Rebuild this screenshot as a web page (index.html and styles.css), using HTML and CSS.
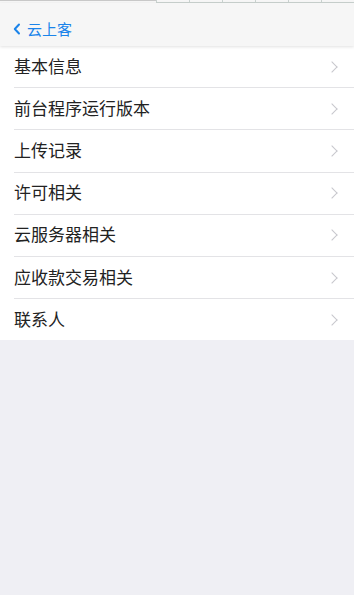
FILE: index.html
```html
<!DOCTYPE html>
<html lang="zh-CN">
<head>
    <meta charset="UTF-8">
    <meta name="viewport" content="width=device-width, initial-scale=1.0">
    <title>云上客</title>
    <link rel="stylesheet" href="styles.css">
</head>
<body>
    <div class="top-strip">
        <div class="strip-left"></div>
        <div class="strip-cells">
            <span></span><span></span><span></span><span></span><span></span><span></span>
        </div>
    </div>

    <div class="navbar">
        <a class="back" href="#">
            <svg width="8" height="12" viewBox="0 0 8 12"><path d="M6 1.5 L1.8 6 L6 10.5" fill="none" stroke="#1b84ea" stroke-width="2" stroke-linecap="round" stroke-linejoin="round"/></svg>
            <span>云上客</span>
        </a>
    </div>

    <ul class="menu">
        <li><span>基本信息</span><i class="chevron"></i></li>
        <li><span>前台程序运行版本</span><i class="chevron"></i></li>
        <li><span>上传记录</span><i class="chevron"></i></li>
        <li><span>许可相关</span><i class="chevron"></i></li>
        <li><span>云服务器相关</span><i class="chevron"></i></li>
        <li><span>应收款交易相关</span><i class="chevron"></i></li>
        <li><span>联系人</span><i class="chevron"></i></li>
    </ul>
</body>
</html>
```

FILE: styles.css
```css
/* Global */
body {
    margin: 0;
    padding: 0;
    background-color: #efeff4;
    font-family: 'Noto Sans CJK SC', 'Noto Sans', sans-serif;
    height: 595px;
    overflow: hidden;
}

/* thin strip at the very top */
.top-strip {
    display: flex;
    height: 3px;
    background-color: #f6f6f6;
}

.strip-left {
    width: 160px;
    border-top: 1px solid #c8c8c8;
}

.strip-cells {
    flex: 1;
    display: flex;
    border-bottom: 1px solid #c9d2cf;
}

.strip-cells span {
    box-sizing: border-box;
    width: 33px;
    border-left: 1px solid #c9d2cf;
}

/* Navigation bar */
.navbar {
    height: 43px;
    background-color: #f6f6f6;
    box-shadow: 0 1px 3px rgba(0, 0, 0, 0.12);
    display: flex;
    align-items: flex-end;
    position: relative;
    z-index: 2;
}

.back {
    display: flex;
    align-items: center;
    gap: 6px;
    margin: 0 0 8px 13px;
    color: #1b84ea;
    text-decoration: none;
    font-size: 15px;
    line-height: 18px;
}

/* Menu list */
.menu {
    list-style: none;
    margin: 0;
    padding: 0 0 0 14px;
    background-color: #fff;
}

.menu li {
    height: 41.2px;
    display: flex;
    align-items: center;
    justify-content: space-between;
    font-size: 17px;
    color: #222;
    border-bottom: 1px solid #e3e3e6;
    padding-right: 18px;
}

.menu li span {
    margin-bottom: 3px;
}

.menu li:last-child {
    border-bottom: none;
}

.chevron {
    width: 7px;
    height: 7px;
    border-top: 1.3px solid #c7c7cc;
    border-right: 1.3px solid #c7c7cc;
    transform: rotate(45deg);
}
```
